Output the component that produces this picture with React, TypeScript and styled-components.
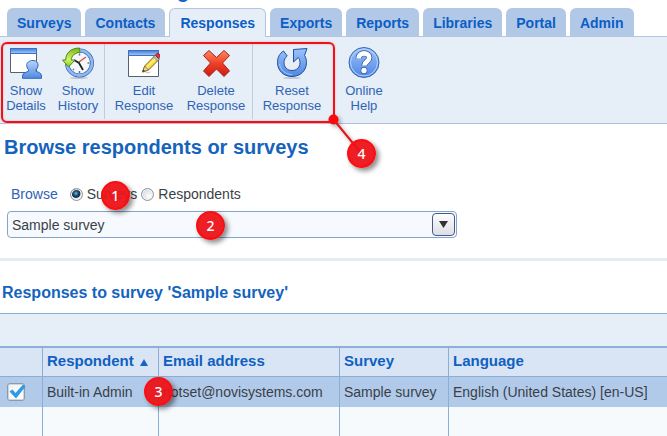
import React, { useState } from "react";
import styled, { createGlobalStyle } from "styled-components";

const GlobalStyle = createGlobalStyle`
  *, *::before, *::after { box-sizing: border-box; }
  body {
    margin: 0;
    background: #fff;
    color: #3a3f47;
    font: 14px/16px "Liberation Sans", Arial, sans-serif;
  }
  button, select, input { font: inherit; color: inherit; margin: 0; }
`;

const Page = styled.div`
  display: flex;
  flex-direction: column;
  min-height: 100vh;
  overflow: hidden;
`;

const Banner = styled.header`
  display: flex;
  align-items: flex-end;
  height: 8px;
  padding-left: 177px;
  overflow: hidden;
  color: #1464c8;
  font-size: 20px;
  font-weight: bold;
  line-height: 26px;
`;

const BannerText = styled.span`
  margin-bottom: 4px;
`;

const Tabs = styled.nav`
  display: flex;
  gap: 4px;
  padding-left: 7px;
`;

const Tab = styled.a<{ $active?: boolean }>`
  position: relative;
  height: ${(p) => (p.$active ? "29px" : "28px")};
  margin-bottom: ${(p) => (p.$active ? "-1px" : "0")};
  padding: 0 10px;
  border: ${(p) => (p.$active ? "1px solid #b3c5de" : "0")};
  border-bottom: 0;
  border-radius: 6px 6px 0 0;
  background: ${(p) => (p.$active ? "#e6eef7" : "#b1c8e6")};
  color: #0b5ec6;
  font-weight: bold;
  line-height: ${(p) => (p.$active ? "28px" : "30px")};
  text-decoration: none;
  white-space: nowrap;
  z-index: 1;
`;

const Toolbar = styled.div`
  position: relative;
  display: flex;
  height: 88px;
  padding: 6px 0 4px;
  border-top: 1px solid #b3c5de;
  border-bottom: 1px solid #b3c1d8;
  background: #e6eef7;
`;

const ToolGroup = styled.div`
  display: flex;

  & + & {
    padding-left: 3px;
    border-left: 1px solid #c1cbdc;
  }
`;

const Tool = styled.button<{ $wide?: boolean }>`
  display: flex;
  flex-direction: column;
  align-items: center;
  gap: 4px;
  width: ${(p) => (p.$wide ? "72px" : "52px")};
  padding: 4px 0 0;
  border: 0;
  background: none;
  color: #2f63b5;
  font-size: 13px;
  line-height: 15px;
  cursor: pointer;

  svg { flex: none; }
`;

const Frame = styled.div`
  position: absolute;
  top: 5px;
  left: 1px;
  width: 334px;
  height: 81px;
  border: 2px solid #f01018;
  border-radius: 6px;
  box-shadow: 0 0 2px #f5a5a8, inset 0 0 2px #f5a5a8;
  pointer-events: none;
`;

const Leader = styled.svg`
  position: absolute;
  top: 70px;
  left: 322px;
  overflow: visible;
  filter: drop-shadow(2px 2px 2px rgba(0, 0, 0, 0.35));
  pointer-events: none;
`;

const Badge = styled.span<{ $x: number; $y: number }>`
  position: absolute;
  left: ${(p) => p.$x}px;
  top: ${(p) => p.$y}px;
  z-index: 2;
  width: 29px;
  height: 29px;
  border: 2px solid #fb0d10;
  border-radius: 50%;
  background: rgba(236, 18, 24, 0.95);
  box-shadow: 3px 3px 5px rgba(0, 0, 0, 0.45);
  color: #fff;
  font: 500 14px/25px "Noto Sans", sans-serif;
  text-align: center;
  pointer-events: none;
`;

const Title = styled.h1`
  margin: 11px 0 0 4px;
  color: #1464bd;
  font-size: 20px;
  line-height: 24px;
`;

const Browse = styled.fieldset`
  display: flex;
  align-items: center;
  margin: 26px 0 0;
  padding: 0 0 0 11px;
  border: 0;
  height: 20px;
`;

const BrowseLabel = styled.span`
  margin-right: 12px;
  color: #2f63b5;
`;

const Option = styled.label`
  position: relative;
  display: flex;
  align-items: center;
  gap: 4px;
  margin-right: 4px;
  padding-top: 1px;
`;

const Radio = styled.input`
  appearance: none;
  width: 13px;
  height: 13px;
  border: 1px solid #8e9399;
  border-radius: 50%;
  background: radial-gradient(circle at 65% 65%, #fff, #c9ccd0);
  box-shadow: inset 0 0 0 1px #f4f4f4;

  &:checked {
    background: radial-gradient(circle at 45% 40%, #7fc4e0 0, #1f5f86 2px, #12283f 4px, #e4e8ec 5px);
  }
`;

const Combo = styled.div`
  position: relative;
  width: 450px;
  max-width: calc(100% - 14px);
  margin: 6px 0 0 7px;
`;

const Select = styled.select`
  display: block;
  appearance: none;
  width: 100%;
  height: 27px;
  padding: 0 30px 0 4px;
  border: 1px solid #84a4d0;
  border-radius: 4px;
  background: #f6fafe;
`;

const ComboArrow = styled.span`
  position: absolute;
  top: 2px;
  right: 2px;
  display: grid;
  place-items: center;
  width: 23px;
  height: 23px;
  border: 1px solid #46588e;
  border-radius: 4px;
  background: linear-gradient(#fdfdfd, #dcdfe3);
  pointer-events: none;
`;

const Rule = styled.hr`
  width: 100%;
  height: 3px;
  margin: 20px 0 0;
  border: 0;
  background: #e6ecf4;
`;

const Subtitle = styled.h2`
  margin: 22px 0 11px 2px;
  color: #1464bd;
  font-size: 16px;
  line-height: 19px;
`;

const GridBar = styled.div`
  height: 33px;
  border-top: 1px solid #8cadd6;
  background: #e6eef7;
`;

const Grid = styled.table`
  width: 100%;
  flex: none;
  table-layout: fixed;
  border-spacing: 0;
  border-top: 2px solid #8cb0da;
  background: #f6fafd;
`;

const Col = styled.col<{ $width?: number }>`
  width: ${(p) => (p.$width ? `${p.$width}px` : "auto")};
`;

const Head = styled.th`
  height: 29px;
  padding: 0 0 2px 4px;
  border-bottom: 1px solid #8cadd6;
  border-left: 1px solid #8cadd6;
  background: #d9e5f4;
  color: #0f60c2;
  font-size: 15px;
  text-align: left;
  white-space: nowrap;

  &:first-child { border-left: 0; }
`;

const Cell = styled.td<{ $selected?: boolean }>`
  position: relative;
  height: ${(p) => (p.$selected ? "30px" : "31px")};
  padding: 0 0 0 4px;
  border-left: 1px solid #8cadd6;
  background: ${(p) => (p.$selected ? "#b1cae9" : "#f6fafd")};
  white-space: nowrap;

  &:first-child { border-left: 0; }
`;

const SortArrow = styled.svg`
  margin-left: 6px;
`;

const CheckWrap = styled.label`
  position: relative;
  display: block;
  width: 18px;
  height: 18px;
  margin-left: 3px;

  svg {
    position: absolute;
    left: 0;
    top: 0;
    overflow: visible;
    pointer-events: none;
  }
`;

const Check = styled.input`
  appearance: none;
  display: block;
  width: 18px;
  height: 18px;
  border: 1px solid #8f9aa8;
  border-radius: 3px;
  background: linear-gradient(135deg, #f0f1f2, #fff);
  box-shadow: inset 0 0 0 1px #d2d5d9;

  &:not(:checked) + svg { display: none; }
`;

const DetailsIcon = () => (
  <svg width="32" height="32" viewBox="0 0 32 32" aria-hidden="true">
    <defs>
      <linearGradient id="bar" x2="0" y2="1">
        <stop stopColor="#3f79d9" /><stop offset="1" stopColor="#a9cdfa" />
      </linearGradient>
      <linearGradient id="person" x2="0" y2="1">
        <stop stopColor="#b9d5fb" /><stop offset="1" stopColor="#4f8ae2" />
      </linearGradient>
    </defs>
    <path d="M.5 1.5h26v24H.5z" fill="#fff" stroke="#566170" />
    <path d="M.5 1.5h26v5H.5z" fill="url(#bar)" stroke="#3d6fc4" />
    <path d="M23 13.5c3.6 0 5.3 2.3 5 5.2-.2 1.9-1.2 3-2 4v1.6c2 .9 5.3 1.2 5.5 4.7v2.3h-19V29c.2-3.5 4.2-3.8 6-4.7v-1.6c-1-1-1.6-2.2-1.8-4-.2-2.900 2.300-5.200 6.300-5.200z" fill="url(#person)" stroke="#3168bd" />
  </svg>
);

const HistoryIcon = () => (
  <svg width="32" height="32" viewBox="0 0 32 32" aria-hidden="true">
    <defs>
      <linearGradient id="green" x2="0" y2="1">
        <stop stopColor="#76b51b" /><stop offset=".6" stopColor="#d4f46b" /><stop offset="1" stopColor="#7fc41c" />
      </linearGradient>
    </defs>
    <ellipse cx="17" cy="31" rx="9" ry="1" fill="#bfc9d4" />
    <circle cx="17.500" cy="16" r="12.500" fill="#f5f8fa" stroke="#2c5cab" strokeWidth="4" />
    <circle cx="17.500" cy="16" r="12.500" fill="none" stroke="#8db8f3" strokeWidth="2.800" />
    <path d="M17 15l7-5" stroke="#e04444" strokeWidth="1.300" />
    <path d="M12 13l5 3 4 7" fill="none" stroke="#222" strokeWidth="1.800" />
    <path d="M17.500 6.500v2M17.500 24v2M25.500 16h2M12 22l-1 1" stroke="#68727e" strokeWidth="1.500" />
    <path d="M17.500 1C9 1 3.500 6 3.800 13H.5l6 7 6.500-7H9.200C9.500 8.500 13 6 18 5.200z" fill="url(#green)" stroke="#4f8a10" />
  </svg>
);

const EditIcon = () => (
  <svg width="32" height="32" viewBox="0 0 32 32" aria-hidden="true">
    <path d="M.5 3.500h30v26H.5z" fill="#fff" stroke="#566170" />
    <path d="M.5 3.500h30v5H.5z" fill="url(#bar)" stroke="#3d6fc4" />
    <path d="M16 25.500l8-1-4 2z" fill="#c3c8cc" />
    <path d="M14.500 25l2.200-6L27 8.500l4 4L20.500 23z" fill="#f7d93a" stroke="#7d641a" />
    <path d="M18.500 20.500L28.500 10.500" stroke="#fff19a" strokeWidth="1.500" />
    <path d="M14.500 25l2.200-6 3.800 4z" fill="#f0d6a4" stroke="#7d641a" strokeWidth=".8" />
    <path d="M14.500 25l.9-2.500 1.600 1.600z" fill="#333" />
    <path d="M25.500 10l2-2 4 4-2 2z" fill="#b9c0c9" stroke="#69707a" strokeWidth=".7" />
    <path d="M27.200 8.200l1.800-1.500c1.500-1 3.500 1 2.800 2.800l-1.200 2z" fill="#dd3540" stroke="#96222c" />
  </svg>
);

const DeleteIcon = () => (
  <svg width="32" height="32" viewBox="0 0 32 32" aria-hidden="true">
    <defs>
      <linearGradient id="red" x2="0" y2="1">
        <stop stopColor="#ff8a5c" /><stop offset=".5" stopColor="#ee4028" /><stop offset="1" stopColor="#cf1710" />
      </linearGradient>
    </defs>
    <path d="M9 3.500l7.500 7 7.500-7 5.500 5-7 7.500 7 8-5.500 5.500-7.500-7.500-7.500 7.500-5.500-5.500 7-8-7-7.500z" fill="url(#red)" stroke="#a92318" strokeLinejoin="round" />
  </svg>
);

const ResetIcon = () => (
  <svg width="32" height="32" viewBox="0 0 32 32" aria-hidden="true">
    <defs>
      <linearGradient id="blue" x2="0" y2="1">
        <stop stopColor="#9bc4fb" /><stop offset="1" stopColor="#4f86e4" />
      </linearGradient>
    </defs>
    <ellipse cx="16" cy="31" rx="9" ry="1" fill="#bfc9d4" />
    <path d="M7.500 4C3.500 6.500 1.500 10.500 1.500 15.500c0 8 6 14 14.500 14s14.500-6 14.500-14c0-2.700-.7-5-2-7L31 1.500 17.500 2.500V15l4.800-4.500c1.200 1.500 1.700 3 1.700 5 0 4.800-3.300 8-8 8s-8-3.200-8-8c0-2.700 1.200-5 3.200-6.500z" fill="url(#blue)" stroke="#234f9c" strokeLinejoin="round" />
    <path d="M3.500 17c1 6 6 10.500 12.500 10.500" fill="none" stroke="#a9cbfa" />
  </svg>
);

const HelpIcon = () => (
  <svg width="32" height="32" viewBox="0 0 32 32" aria-hidden="true">
    <circle cx="16" cy="15.500" r="15" fill="url(#blue)" stroke="#3764ac" />
    <circle cx="16" cy="15.500" r="13.500" fill="none" stroke="#b8d4fb" />
    <path d="M10.500 11.500C11 4.500 21.500 5 21.200 10.800c-.1 4-4.700 3.700-4.900 7.700" fill="none" stroke="#315b9d" strokeWidth="6" />
    <circle cx="16" cy="23.500" r="3.400" fill="#315b9d" />
    <path d="M10.500 11.500C11 4.500 21.500 5 21.200 10.800c-.1 4-4.700 3.700-4.900 7.700" fill="none" stroke="#fff" strokeWidth="4.600" />
    <circle cx="16" cy="23.500" r="2.700" fill="#fff" />
  </svg>
);

const tabs = ["Surveys", "Contacts", "Responses", "Exports", "Reports", "Libraries", "Portal", "Admin"];

const groups = [
  [
    { icon: <DetailsIcon />, top: "Show", bottom: "Details", wide: false },
    { icon: <HistoryIcon />, top: "Show", bottom: "History", wide: false },
  ],
  [
    { icon: <EditIcon />, top: "Edit", bottom: "Response", wide: true },
    { icon: <DeleteIcon />, top: "Delete", bottom: "Response", wide: true },
  ],
  [
    { icon: <ResetIcon />, top: "Reset", bottom: "Response", wide: true },
    { icon: <HelpIcon />, top: "Online", bottom: "Help", wide: true },
  ],
];

export default function App() {
  const [mode, setMode] = useState("surveys");
  const [checked, setChecked] = useState(true);

  return (
    <Page>
      <GlobalStyle />
      <Banner><BannerText>g</BannerText></Banner>
      <Tabs>
        {tabs.map((name) => (
          <Tab key={name} href="#" $active={name === "Responses"}>{name}</Tab>
        ))}
      </Tabs>
      <Toolbar>
        {groups.map((tools, i) => (
          <ToolGroup key={i}>
            {tools.map((t) => (
              <Tool key={t.top + t.bottom} type="button" $wide={t.wide}>
                {t.icon}
                <span>{t.top}<br />{t.bottom}</span>
              </Tool>
            ))}
          </ToolGroup>
        ))}
        <Frame />
        <Leader width="50" height="60" aria-hidden="true">
          <path d="M11.500 12.500L39 46" stroke="#e8121a" strokeWidth="2" />
          <circle cx="11.500" cy="12.500" r="5" fill="#f80a0e" />
        </Leader>
        <Badge $x={347} $y={102}>4</Badge>
      </Toolbar>

      <Title>Browse respondents or surveys</Title>
      <Browse aria-label="Browse">
        <BrowseLabel>Browse</BrowseLabel>
        <Option>
          <Radio type="radio" name="mode" checked={mode === "surveys"} onChange={() => setMode("surveys")} />
          Surveys
          <Badge $x={31} $y={-4}>1</Badge>
        </Option>
        <Option>
          <Radio type="radio" name="mode" checked={mode === "respondents"} onChange={() => setMode("respondents")} />
          Respondents
        </Option>
      </Browse>
      <Combo>
        <Select aria-label="Survey" defaultValue="sample">
          <option value="sample">Sample survey</option>
        </Select>
        <ComboArrow>
          <svg width="9" height="7" aria-hidden="true"><path d="M0 0h9L4.500 7z" fill="#333" /></svg>
        </ComboArrow>
        <Badge $x={189} $y={0}>2</Badge>
      </Combo>
      <Rule />

      <Subtitle>Responses to survey 'Sample survey'</Subtitle>
      <GridBar />
      <Grid>
        <colgroup>
          <Col $width={42} />
          <Col $width={116} />
          <Col $width={181} />
          <Col $width={109} />
          <Col />
        </colgroup>
        <thead>
          <tr>
            <Head aria-label="Selected" />
            <Head aria-sort="ascending">
              Respondent
              <SortArrow width="8" height="7" aria-hidden="true"><path d="M0 7h8L4 0z" fill="#1464c8" /></SortArrow>
            </Head>
            <Head>Email address</Head>
            <Head>Survey</Head>
            <Head>Language</Head>
          </tr>
        </thead>
        <tbody>
          <tr>
            <Cell $selected>
              <CheckWrap>
                <Check type="checkbox" aria-label="Select Built-in Admin" checked={checked} onChange={(e) => setChecked(e.target.checked)} />
                <svg width="18" height="18" aria-hidden="true">
                  <path d="M2.500 8.500L5.500 6.500 8.500 10 16 1.500 18.500 3.500 9 15.500z" fill="#2f9be6" />
                </svg>
              </CheckWrap>
            </Cell>
            <Cell $selected>Built-in Admin</Cell>
            <Cell $selected>
              notset@novisystems.com
              <Badge $x={-15} $y={0}>3</Badge>
            </Cell>
            <Cell $selected>Sample survey</Cell>
            <Cell $selected>English (United States) [en-US]</Cell>
          </tr>
          <tr>
            <Cell /><Cell /><Cell /><Cell /><Cell />
          </tr>
        </tbody>
      </Grid>
    </Page>
  );
}
